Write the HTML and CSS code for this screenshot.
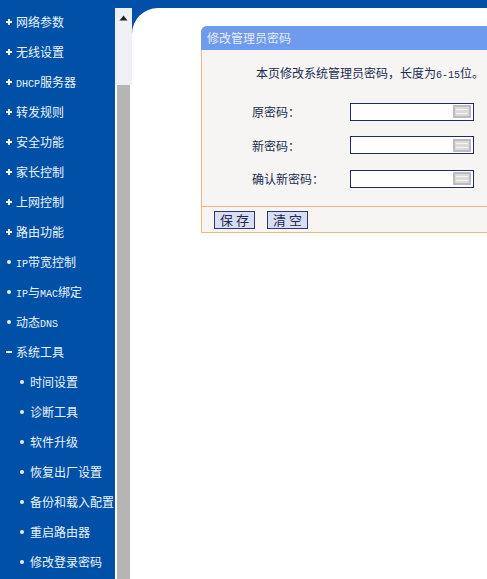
FILE: index.html
```html
<!DOCTYPE html>
<html lang="zh-CN">
<head>
    <meta charset="UTF-8">
    <title>修改管理员密码</title>
    <link rel="stylesheet" href="styles.css">
</head>
<body>

<div class="menu">
    <div class="item"><i class="plus"></i><span>网络参数</span></div>
    <div class="item"><i class="plus"></i><span>无线设置</span></div>
    <div class="item"><i class="plus"></i><span><span class="latin">DHCP</span>服务器</span></div>
    <div class="item"><i class="plus"></i><span>转发规则</span></div>
    <div class="item"><i class="plus"></i><span>安全功能</span></div>
    <div class="item"><i class="plus"></i><span>家长控制</span></div>
    <div class="item"><i class="plus"></i><span>上网控制</span></div>
    <div class="item"><i class="plus"></i><span>路由功能</span></div>
    <div class="item"><i class="dot"></i><span><span class="latin">IP</span>带宽控制</span></div>
    <div class="item"><i class="dot"></i><span><span class="latin">IP</span>与<span class="latin">MAC</span>绑定</span></div>
    <div class="item"><i class="dot"></i><span>动态<span class="latin">DNS</span></span></div>
    <div class="item"><i class="minus"></i><span>系统工具</span></div>
    <div class="item sub"><i class="dot"></i><span>时间设置</span></div>
    <div class="item sub"><i class="dot"></i><span>诊断工具</span></div>
    <div class="item sub"><i class="dot"></i><span>软件升级</span></div>
    <div class="item sub"><i class="dot"></i><span>恢复出厂设置</span></div>
    <div class="item sub"><i class="dot"></i><span>备份和载入配置</span></div>
    <div class="item sub"><i class="dot"></i><span>重启路由器</span></div>
    <div class="item sub"><i class="dot"></i><span>修改登录密码</span></div>
</div>

<div class="right">
    <div class="topbar"></div>
    <div class="under">
        <div class="scrollbar">
            <div class="track">
                <svg class="arrow" width="9" height="6" viewBox="0 0 9 6"><path d="M4.5 0.5L8.5 5.5H0.5Z" fill="#222"/></svg>
            </div>
            <div class="thumb"></div>
        </div>
        <div class="content">
            <div class="panel">
                <div class="title">修改管理员密码</div>
                <div class="body">
                    <p class="intro">本页修改系统管理员密码，长度为<span class="latin">6-15</span>位。</p>
                    <div class="row">
                        <label>原密码：</label>
                        <div class="field">
                            <svg class="kbd" width="18" height="13" viewBox="0 0 18 13"><rect width="18" height="13" fill="#bcbcbc"/><rect x="2" y="2" width="14" height="9" fill="#dadada"/><path d="M3 4.5H15M3 8.5H15" stroke="#f4f4f4" stroke-width="1"/></svg>
                        </div>
                    </div>
                    <div class="row">
                        <label>新密码：</label>
                        <div class="field">
                            <svg class="kbd" width="18" height="13" viewBox="0 0 18 13"><rect width="18" height="13" fill="#bcbcbc"/><rect x="2" y="2" width="14" height="9" fill="#dadada"/><path d="M3 4.5H15M3 8.5H15" stroke="#f4f4f4" stroke-width="1"/></svg>
                        </div>
                    </div>
                    <div class="row">
                        <label>确认新密码：</label>
                        <div class="field">
                            <svg class="kbd" width="18" height="13" viewBox="0 0 18 13"><rect width="18" height="13" fill="#bcbcbc"/><rect x="2" y="2" width="14" height="9" fill="#dadada"/><path d="M3 4.5H15M3 8.5H15" stroke="#f4f4f4" stroke-width="1"/></svg>
                        </div>
                    </div>
                </div>
                <div class="foot">
                    <button class="btn">保存</button>
                    <button class="btn">清空</button>
                </div>
            </div>
        </div>
    </div>
</div>

</body>
</html>
```

FILE: styles.css
```css
html, body {
    margin: 0;
    height: 100%;
    overflow: hidden;
}

body {
    display: flex;
    width: 487px;
    height: 579px;
    background-color: #0050a8;
    font-family: "Noto Sans CJK SC", sans-serif;
    font-size: 12px;
}

.latin {
    font-family: "Liberation Mono", monospace;
    font-size: 10px;
    line-height: 0;
}

/* left menu */
.menu {
    width: 115px;
    flex: none;
    padding-top: 7px;
    color: #eaf4f8;
    white-space: nowrap;
    overflow: hidden;
}

.item {
    height: 30px;
    line-height: 30px;
    padding-left: 6px;
    display: flex;
    align-items: center;
}

.item.sub {
    padding-left: 20px;
}

.item i {
    display: block;
    flex: none;
    margin-right: 4px;
}

.plus {
    width: 6px;
    height: 6px;
    background:
        linear-gradient(#f4fbe8, #f4fbe8) center / 6px 2px no-repeat,
        linear-gradient(#f4fbe8, #f4fbe8) center / 2px 6px no-repeat;
}

.minus {
    width: 6px;
    height: 2px;
    background-color: #f4fbe8;
}

.dot {
    width: 4px;
    height: 4px;
    margin-left: 1px;
    border-radius: 50%;
    background-color: #e6f2f8;
}

.item > .dot {
    margin-right: 5px;
}

.item.sub > .dot {
    margin-left: 0;
    margin-right: 6px;
}

/* right side */
.right {
    flex: 1;
    display: flex;
    flex-direction: column;
    min-width: 0;
}

.topbar {
    height: 8px;
    flex: none;
}

.under {
    flex: 1;
    display: flex;
    min-height: 0;
}

.scrollbar {
    width: 17px;
    flex: none;
    display: flex;
    flex-direction: column;
    background-color: #ffffff;
}

.track {
    height: 77px;
    background-color: #eef0f6;
    text-align: center;
}

.arrow {
    display: block;
    margin: 7px 0 0 4px;
}

.thumb {
    flex: 1;
    width: 13px;
    margin-left: 2px;
    background-color: #b6b4b4;
}

.content {
    flex: 1;
    min-width: 0;
    background-color: #ffffff;
    border-top-left-radius: 26px;
    padding: 18px 0 0 69px;
    overflow: hidden;
}

.panel {
    width: 320px;
    height: 207px;
    box-sizing: border-box;
    background-color: #f6f5f4;
    border: 1px solid #eeb778;
    border-top: none;
    border-top-left-radius: 6px;
    display: flex;
    flex-direction: column;
}

.title {
    height: 24px;
    line-height: 24px;
    margin-left: -1px;
    padding-left: 6px;
    background-color: #6f9bee;
    border-top-left-radius: 6px;
    color: #e6edf8;
    font-size: 12px;
}

.body {
    height: 156px;
    box-sizing: border-box;
    padding-top: 14px;
    color: #1c2c50;
}

.intro {
    margin: 0 0 13px 54px;
    height: 18px;
    line-height: 18px;
}

.row {
    display: flex;
    align-items: center;
    height: 33.5px;
    padding-left: 50px;
}

.row label {
    width: 98px;
}

.field {
    width: 120px;
    height: 16px;
    border: 1px solid #1e2c60;
    background-color: #ffffff;
    display: flex;
    align-items: center;
    justify-content: flex-end;
    padding-right: 2px;
}

.foot {
    flex: 1;
    border-top: 1px solid #eeb778;
    display: flex;
    align-items: center;
    gap: 12px;
    padding-left: 12px;
}

.btn {
    width: 41px;
    height: 18px;
    padding: 0;
    border: 1px solid #2a3a70;
    background-color: #d9def2;
    color: #1c2c50;
    font-family: "Noto Sans CJK SC", sans-serif;
    font-size: 13px;
    line-height: 16px;
    letter-spacing: 3px;
    text-indent: 3px;
}
```
